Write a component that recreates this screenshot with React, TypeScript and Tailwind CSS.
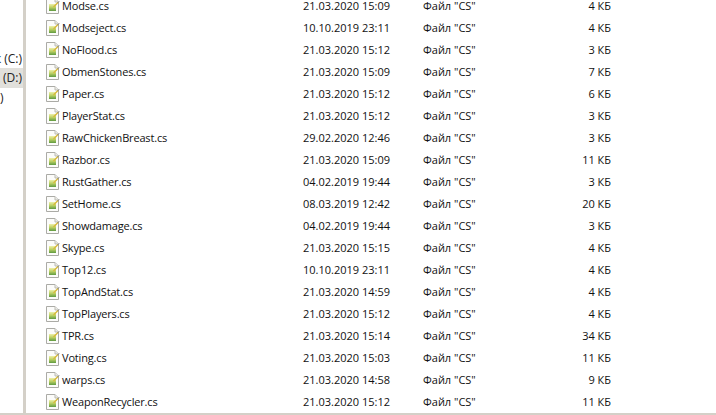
const files = [
  ['Modse.cs', '21.03.2020 15:09', '4 КБ'],
  ['Modseject.cs', '10.10.2019 23:11', '4 КБ'],
  ['NoFlood.cs', '21.03.2020 15:12', '3 КБ'],
  ['ObmenStones.cs', '21.03.2020 15:09', '7 КБ'],
  ['Paper.cs', '21.03.2020 15:12', '6 КБ'],
  ['PlayerStat.cs', '21.03.2020 15:12', '3 КБ'],
  ['RawChickenBreast.cs', '29.02.2020 12:46', '3 КБ'],
  ['Razbor.cs', '21.03.2020 15:09', '11 КБ'],
  ['RustGather.cs', '04.02.2019 19:44', '3 КБ'],
  ['SetHome.cs', '08.03.2019 12:42', '20 КБ'],
  ['Showdamage.cs', '04.02.2019 19:44', '3 КБ'],
  ['Skype.cs', '21.03.2020 15:15', '4 КБ'],
  ['Top12.cs', '10.10.2019 23:11', '4 КБ'],
  ['TopAndStat.cs', '21.03.2020 14:59', '4 КБ'],
  ['TopPlayers.cs', '21.03.2020 15:12', '4 КБ'],
  ['TPR.cs', '21.03.2020 15:14', '34 КБ'],
  ['Voting.cs', '21.03.2020 15:03', '11 КБ'],
  ['warps.cs', '21.03.2020 14:58', '9 КБ'],
  ['WeaponRecycler.cs', '21.03.2020 15:12', '11 КБ'],
];

// Document icon: folded page, green picture block and a small pencil
function FileIcon() {
  return (
    <svg width="14" height="16" viewBox="0 0 14 16" className="shrink-0">
      <defs>
        <linearGradient id="badge" x1="0" y1="0" x2="0" y2="1">
          <stop offset="0" stopColor="#eef0a8" />
          <stop offset="0.5" stopColor="#b8cf62" />
          <stop offset="1" stopColor="#5f9a42" />
        </linearGradient>
      </defs>
      <path d="M0.5 0.5H9L12.5 4V15.5H0.5Z" fill="#fcfcfa" stroke="#ababa6" />
      <path d="M9 0.5V4H12.5" fill="#ecece6" stroke="#bdbdb6" />
      <rect x="3" y="6" width="7" height="7" fill="url(#badge)" />
      <path d="M7.5 9L12 4.5" stroke="#d8b93c" strokeWidth="1.4" />
      <path d="M12 4.5L13 3.5" stroke="#555" strokeWidth="1" />
    </svg>
  );
}

export default function App() {
  return (
    <div className="flex h-[415px] w-[716px] flex-col overflow-hidden bg-white font-['Open_Sans','Noto_Sans',sans-serif] text-[11px] text-[#111]">
      <div className="flex min-h-0 flex-1">
        {/* Left tree pane, cut off by the crop */}
        <div className="flex w-[23px] shrink-0 flex-col overflow-hidden pt-[48px] text-[12px] text-[#222]">
          <div className="flex h-[20px] items-center justify-end overflow-hidden whitespace-nowrap pt-[1px] pr-[1px]">к (C:)</div>
          <div className="flex h-[20px] items-center justify-end overflow-hidden whitespace-nowrap bg-[#e1e0db] pr-[1px]">к (D:)</div>
          <div className="flex h-[19px] items-center">)</div>
        </div>
        <div className="w-[3px] shrink-0 bg-[#d4d0c8]" />

        {/* File list */}
        <div className="-mt-[5px] min-w-0 flex-1">
          {files.map(([name, date, size]) => (
            <div key={name} className="flex h-[22px] items-center whitespace-nowrap">
              <div className="ml-[20px] flex w-[257px] items-center gap-[2px]">
                <FileIcon />
                <span className="tracking-[-0.17px]">{name}</span>
              </div>
              <div className="w-[120px]">{date}</div>
              <div className="w-[100px]">Файл "CS"</div>
              <div className="w-[88px] text-right">{size}</div>
            </div>
          ))}
        </div>
      </div>
      <div className="h-[2px] shrink-0 bg-[#d4d0c8]" />
    </div>
  );
}
